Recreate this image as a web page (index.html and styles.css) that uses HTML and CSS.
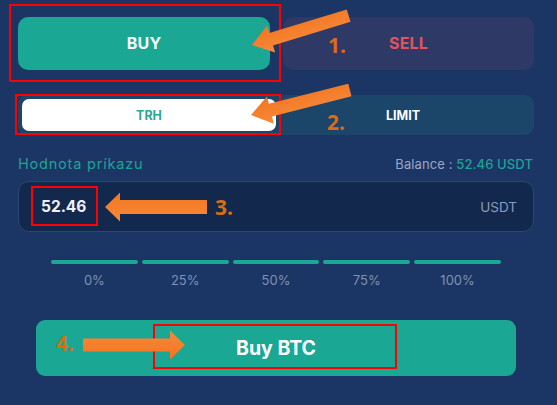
FILE: index.html
```html
<!DOCTYPE html>
<html lang="cs">
<head>
<meta charset="utf-8">
<title>Buy BTC</title>
<link rel="stylesheet" href="styles.css">
</head>
<body>
<div class="panel">
  <div class="side-tabs">
    <button class="side buy">BUY</button>
    <button class="side sell">SELL</button>
  </div>
  <div class="type-toggle">
    <button class="type active">TRH</button>
    <button class="type">LIMIT</button>
  </div>
  <div class="label-row">
    <span class="field-label">Hodnota príkazu</span>
    <span class="balance">Balance : <span class="balance-value">52.46 USDT</span></span>
  </div>
  <div class="amount-input">
    <span class="amount">52.46</span>
    <span class="unit">USDT</span>
  </div>
  <div class="slider">
    <div class="step"><span class="bar"></span><span class="pct">0%</span></div>
    <div class="step"><span class="bar"></span><span class="pct">25%</span></div>
    <div class="step"><span class="bar"></span><span class="pct">50%</span></div>
    <div class="step"><span class="bar"></span><span class="pct">75%</span></div>
    <div class="step"><span class="bar"></span><span class="pct">100%</span></div>
  </div>
  <button class="submit">Buy BTC</button>
</div>

<div class="mark mark-1"></div>
<div class="mark mark-2"></div>
<div class="mark mark-3"></div>
<div class="mark mark-4"></div>

<svg class="arrows" width="557" height="405" viewBox="0 0 557 405" xmlns="http://www.w3.org/2000/svg">
  <defs>
    <linearGradient id="og" x1="0" y1="0" x2="0" y2="1">
      <stop offset="0" stop-color="#f27620"/>
      <stop offset="1" stop-color="#f6893a"/>
    </linearGradient>
  </defs>
  <path fill="url(#og)" transform="translate(252,45) rotate(-16.9)" d="M0,0 L20,-14 L20,-6.5 L101,-6.5 L101,6.5 L20,6.5 L20,14 Z"/>
  <path fill="url(#og)" transform="translate(251,115) rotate(-14.2)" d="M0,0 L20,-14 L20,-6.5 L102,-6.5 L102,6.5 L20,6.5 L20,14 Z"/>
  <path fill="url(#og)" transform="translate(105,207)" d="M0,0 L15,-14.5 L15,-7 L102,-7 L102,7 L15,7 L15,14.5 Z"/>
  <path fill="url(#og)" transform="translate(185,345) rotate(180)" d="M0,0 L15,-14.5 L15,-6.5 L102,-6.5 L102,6.5 L15,6.5 L15,14.5 Z"/>
</svg>

<span class="step-num num-1">1.</span>
<span class="step-num num-2">2.</span>
<span class="step-num num-3">3.</span>
<span class="step-num num-4">4.</span>
</body>
</html>
```

FILE: styles.css
```css
* { box-sizing: border-box; }

html, body {
  margin: 0;
  padding: 0;
  width: 557px;
  height: 405px;
  overflow: hidden;
  background: #1b3564;
  font-family: Inter, "Noto Sans", sans-serif;
}

body { position: relative; }

button {
  font-family: inherit;
  border: 0;
  cursor: pointer;
}

.panel {
  padding: 17px 23px 0 18px;
  display: flex;
  flex-direction: column;
}

.side-tabs {
  display: grid;
  grid-template-columns: 252px 251px;
  gap: 13px;
}

.side {
  height: 53px;
  border-radius: 10px;
  font-size: 16px;
  font-weight: 700;
  letter-spacing: 0.2px;
  padding: 0 0 2px 0;
}

.buy {
  background: #1aa794;
  color: #f4fbfa;
}

.sell {
  background: #2e3966;
  color: #e0535f;
}

.type-toggle {
  margin-top: 25px;
  height: 40px;
  background: #1b4569;
  border-radius: 9px;
  padding: 4px;
  display: grid;
  grid-template-columns: 254px 1fr;
}

.type {
  background: transparent;
  color: #ffffff;
  font-size: 12.5px;
  font-weight: 700;
  border-radius: 7px;
  padding: 0;
}

.type.active {
  background: #ffffff;
  color: #29a898;
}

.label-row {
  margin-top: 20px;
  display: flex;
  justify-content: space-between;
  align-items: baseline;
}

.field-label {
  color: #1fa394;
  font-size: 14.5px;
  letter-spacing: 0.8px;
}

.balance {
  color: #9ba7c7;
  font-size: 13px;
  letter-spacing: 0.1px;
  margin-right: 1px;
}

.balance-value {
  color: #1fa394;
  font-weight: 500;
}

.amount-input {
  margin-top: 9px;
  height: 51px;
  background: #13284d;
  border: 1px solid #2c4571;
  border-radius: 11px;
  display: flex;
  align-items: center;
  justify-content: space-between;
  padding: 0 16px 0 22px;
}

.amount {
  color: #eef2f8;
  font-size: 15.5px;
  font-weight: 700;
}

.unit {
  color: #8d9bbd;
  font-size: 13.5px;
}

.slider {
  margin: 28px 33px 0 33px;
  display: grid;
  grid-template-columns: repeat(5, 1fr);
  gap: 4px;
}

.step {
  display: flex;
  flex-direction: column;
  align-items: center;
}

.bar {
  display: block;
  width: 100%;
  height: 3.5px;
  background: #1aa794;
  border-radius: 2px;
}

.pct {
  margin-top: 8px;
  color: #7f91b7;
  font-size: 13px;
}

.submit {
  margin: 32px 18px 0 18px;
  height: 56px;
  background: #1aa794;
  border-radius: 9px;
  color: #ffffff;
  font-size: 19.5px;
  font-weight: 700;
}

.mark {
  position: absolute;
  border: 2px solid #ff0000;
}

.mark-1 { left: 9px; top: 4px; width: 272px; height: 78px; }
.mark-2 { left: 15px; top: 94px; width: 266px; height: 41px; }
.mark-3 { left: 31px; top: 186px; width: 67px; height: 40px; }
.mark-4 { left: 153px; top: 324px; width: 244px; height: 45px; }

.arrows {
  position: absolute;
  left: 0;
  top: 0;
  pointer-events: none;
}

.step-num {
  position: absolute;
  color: #dc6c12;
  font-family: "Open Sans", sans-serif;
  font-weight: 700;
  font-size: 21px;
  line-height: 1;
}

.num-1 { left: 328px; top: 35px; }
.num-2 { left: 327px; top: 112px; }
.num-3 { left: 215px; top: 197px; }
.num-4 { left: 56px; top: 333px; }
```
